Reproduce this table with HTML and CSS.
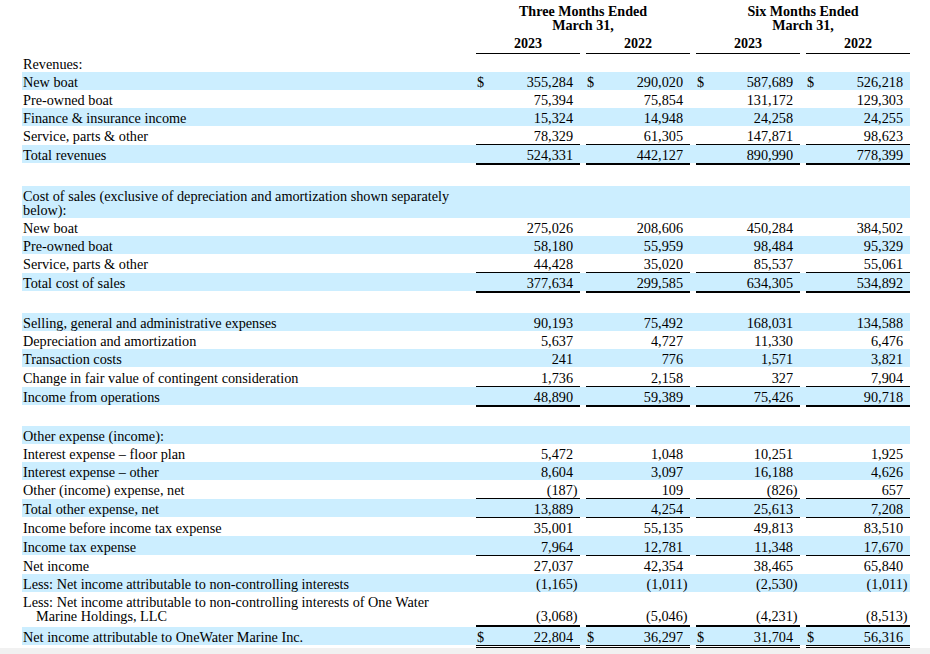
FILE: index.html
```html
<!DOCTYPE html>
<html>
<head>
<meta charset="utf-8">
<link rel="stylesheet" href="styles.css">
</head>
<body>
<div class="sheet">
  <div class="row head">
    <div class="lab"></div>
    <div class="title">Three Months Ended<br>March 31,</div>
    <div class="title">Six Months Ended<br>March 31,</div>
  </div>
  <div class="row years">
    <div class="lab"></div>
    <div class="yr">2023</div><div class="yr">2022</div><div class="yr">2023</div><div class="yr">2022</div>
  </div>
  <div class="rule r1"><span></span><i></i><i></i><i></i><i></i></div>

  <div class="row"><div class="lab">Revenues:</div><div class="v"></div><div class="v"></div><div class="v"></div><div class="v"></div></div>
  <div class="row hl"><div class="lab">New boat</div><div class="v"><span>$</span><span class="n">355,284</span></div><div class="v"><span>$</span><span class="n">290,020</span></div><div class="v"><span>$</span><span class="n">587,689</span></div><div class="v"><span>$</span><span class="n">526,218</span></div></div>
  <div class="row"><div class="lab">Pre-owned boat</div><div class="v"><span class="n">75,394</span></div><div class="v"><span class="n">75,854</span></div><div class="v"><span class="n">131,172</span></div><div class="v"><span class="n">129,303</span></div></div>
  <div class="row hl"><div class="lab">Finance &amp; insurance income</div><div class="v"><span class="n">15,324</span></div><div class="v"><span class="n">14,948</span></div><div class="v"><span class="n">24,258</span></div><div class="v"><span class="n">24,255</span></div></div>
  <div class="row"><div class="lab">Service, parts &amp; other</div><div class="v"><span class="n">78,329</span></div><div class="v"><span class="n">61,305</span></div><div class="v"><span class="n">147,871</span></div><div class="v"><span class="n">98,623</span></div></div>
  <div class="rule r1"><span></span><i></i><i></i><i></i><i></i></div>
  <div class="row hl"><div class="lab">Total revenues</div><div class="v"><span class="n">524,331</span></div><div class="v"><span class="n">442,127</span></div><div class="v"><span class="n">890,990</span></div><div class="v"><span class="n">778,399</span></div></div>
  <div class="rule r2"><span></span><i></i><i></i><i></i><i></i></div>
  <div class="spacer sp1"></div>

  <div class="row hl"><div class="lab">Cost of sales (exclusive of depreciation and amortization shown separately<br>below):</div><div class="v"></div><div class="v"></div><div class="v"></div><div class="v"></div></div>
  <div class="row"><div class="lab">New boat</div><div class="v"><span class="n">275,026</span></div><div class="v"><span class="n">208,606</span></div><div class="v"><span class="n">450,284</span></div><div class="v"><span class="n">384,502</span></div></div>
  <div class="row hl"><div class="lab">Pre-owned boat</div><div class="v"><span class="n">58,180</span></div><div class="v"><span class="n">55,959</span></div><div class="v"><span class="n">98,484</span></div><div class="v"><span class="n">95,329</span></div></div>
  <div class="row"><div class="lab">Service, parts &amp; other</div><div class="v"><span class="n">44,428</span></div><div class="v"><span class="n">35,020</span></div><div class="v"><span class="n">85,537</span></div><div class="v"><span class="n">55,061</span></div></div>
  <div class="rule r1"><span></span><i></i><i></i><i></i><i></i></div>
  <div class="row hl"><div class="lab">Total cost of sales</div><div class="v"><span class="n">377,634</span></div><div class="v"><span class="n">299,585</span></div><div class="v"><span class="n">634,305</span></div><div class="v"><span class="n">534,892</span></div></div>
  <div class="rule r2"><span></span><i></i><i></i><i></i><i></i></div>
  <div class="spacer sp2"></div>

  <div class="row hl"><div class="lab">Selling, general and administrative expenses</div><div class="v"><span class="n">90,193</span></div><div class="v"><span class="n">75,492</span></div><div class="v"><span class="n">168,031</span></div><div class="v"><span class="n">134,588</span></div></div>
  <div class="row"><div class="lab">Depreciation and amortization</div><div class="v"><span class="n">5,637</span></div><div class="v"><span class="n">4,727</span></div><div class="v"><span class="n">11,330</span></div><div class="v"><span class="n">6,476</span></div></div>
  <div class="row hl"><div class="lab">Transaction costs</div><div class="v"><span class="n">241</span></div><div class="v"><span class="n">776</span></div><div class="v"><span class="n">1,571</span></div><div class="v"><span class="n">3,821</span></div></div>
  <div class="row"><div class="lab">Change in fair value of contingent consideration</div><div class="v"><span class="n">1,736</span></div><div class="v"><span class="n">2,158</span></div><div class="v"><span class="n">327</span></div><div class="v"><span class="n">7,904</span></div></div>
  <div class="rule r1"><span></span><i></i><i></i><i></i><i></i></div>
  <div class="row hl"><div class="lab">Income from operations</div><div class="v"><span class="n">48,890</span></div><div class="v"><span class="n">59,389</span></div><div class="v"><span class="n">75,426</span></div><div class="v"><span class="n">90,718</span></div></div>
  <div class="rule r2"><span></span><i></i><i></i><i></i><i></i></div>
  <div class="spacer sp3"></div>

  <div class="row hl"><div class="lab">Other expense (income):</div><div class="v"></div><div class="v"></div><div class="v"></div><div class="v"></div></div>
  <div class="row"><div class="lab">Interest expense – floor plan</div><div class="v"><span class="n">5,472</span></div><div class="v"><span class="n">1,048</span></div><div class="v"><span class="n">10,251</span></div><div class="v"><span class="n">1,925</span></div></div>
  <div class="row hl"><div class="lab">Interest expense – other</div><div class="v"><span class="n">8,604</span></div><div class="v"><span class="n">3,097</span></div><div class="v"><span class="n">16,188</span></div><div class="v"><span class="n">4,626</span></div></div>
  <div class="row"><div class="lab">Other (income) expense, net</div><div class="v"><span class="n">(187<span class="cp">)</span></span></div><div class="v"><span class="n">109</span></div><div class="v"><span class="n">(826<span class="cp">)</span></span></div><div class="v"><span class="n">657</span></div></div>
  <div class="rule r1"><span></span><i></i><i></i><i></i><i></i></div>
  <div class="row hl"><div class="lab">Total other expense, net</div><div class="v"><span class="n">13,889</span></div><div class="v"><span class="n">4,254</span></div><div class="v"><span class="n">25,613</span></div><div class="v"><span class="n">7,208</span></div></div>
  <div class="rule r1"><span></span><i></i><i></i><i></i><i></i></div>
  <div class="row"><div class="lab">Income before income tax expense</div><div class="v"><span class="n">35,001</span></div><div class="v"><span class="n">55,135</span></div><div class="v"><span class="n">49,813</span></div><div class="v"><span class="n">83,510</span></div></div>
  <div class="row hl"><div class="lab">Income tax expense</div><div class="v"><span class="n">7,964</span></div><div class="v"><span class="n">12,781</span></div><div class="v"><span class="n">11,348</span></div><div class="v"><span class="n">17,670</span></div></div>
  <div class="rule r1"><span></span><i></i><i></i><i></i><i></i></div>
  <div class="row"><div class="lab">Net income</div><div class="v"><span class="n">27,037</span></div><div class="v"><span class="n">42,354</span></div><div class="v"><span class="n">38,465</span></div><div class="v"><span class="n">65,840</span></div></div>
  <div class="row hl"><div class="lab">Less: Net income attributable to non-controlling interests</div><div class="v"><span class="n">(1,165<span class="cp">)</span></span></div><div class="v"><span class="n">(1,011<span class="cp">)</span></span></div><div class="v"><span class="n">(2,530<span class="cp">)</span></span></div><div class="v"><span class="n">(1,011<span class="cp">)</span></span></div></div>
  <div class="row tall"><div class="lab hang">Less: Net income attributable to non-controlling interests of One Water<br>Marine Holdings, LLC</div><div class="v"><span class="n">(3,068<span class="cp">)</span></span></div><div class="v"><span class="n">(5,046<span class="cp">)</span></span></div><div class="v"><span class="n">(4,231<span class="cp">)</span></span></div><div class="v"><span class="n">(8,513<span class="cp">)</span></span></div></div>
  <div class="rule r2"><span></span><i></i><i></i><i></i><i></i></div>
  <div class="row hl"><div class="lab">Net income attributable to OneWater Marine Inc.</div><div class="v"><span>$</span><span class="n">22,804</span></div><div class="v"><span>$</span><span class="n">36,297</span></div><div class="v"><span>$</span><span class="n">31,704</span></div><div class="v"><span>$</span><span class="n">56,316</span></div></div>
  <div class="rule rd"><span></span><i></i><i></i><i></i><i></i></div>
</div>
</body>
</html>
```

FILE: styles.css
```css
html {
  background: #f1f1f1;
}

body {
  margin: 0;
  background: #ffffff;
  color: #000000;
  font-family: "Liberation Serif", "Times New Roman", serif;
  font-size: 14.25px;
  line-height: 14px;
}

.sheet {
  padding: 0 0 0 22px;
}

.row,
.rule {
  display: grid;
  grid-template-columns: 448px repeat(4, 104px);
  column-gap: 6px;
  width: 888px;
}

.hl {
  background: #cceeff;
}

.lab {
  padding: 3.1px 0 1px 1px;
}

.hang {
  padding-left: 14px;
  text-indent: -13px;
}

.v {
  display: flex;
  align-items: flex-end;
  padding: 3.1px 7px 1px 1px;
}

.n {
  margin-left: auto;
}

.cp {
  margin-right: -4.6px;
}

.tall .lab,
.tall .v {
  padding-bottom: 2.3px;
}

.head .title {
  grid-column: span 2;
  text-align: center;
  font-weight: bold;
  font-size: 14.1px;
  line-height: 13.3px;
  padding-top: 5.3px;
}

.years .yr {
  text-align: center;
  font-weight: bold;
  font-size: 14.1px;
  padding: 4.6px 0 2.2px;
}

.rule i {
  background: #000000;
}

.r1 {
  height: 1px;
}

.r2 {
  height: 2px;
}

.rd {
  height: 3px;
}

.rd i {
  background: none;
  border-top: 1px solid #000000;
  border-bottom: 1px solid #000000;
}

.sp1 {
  height: 20.4px;
}

.sp2 {
  height: 20.1px;
}

.sp3 {
  height: 19.2px;
}
```
